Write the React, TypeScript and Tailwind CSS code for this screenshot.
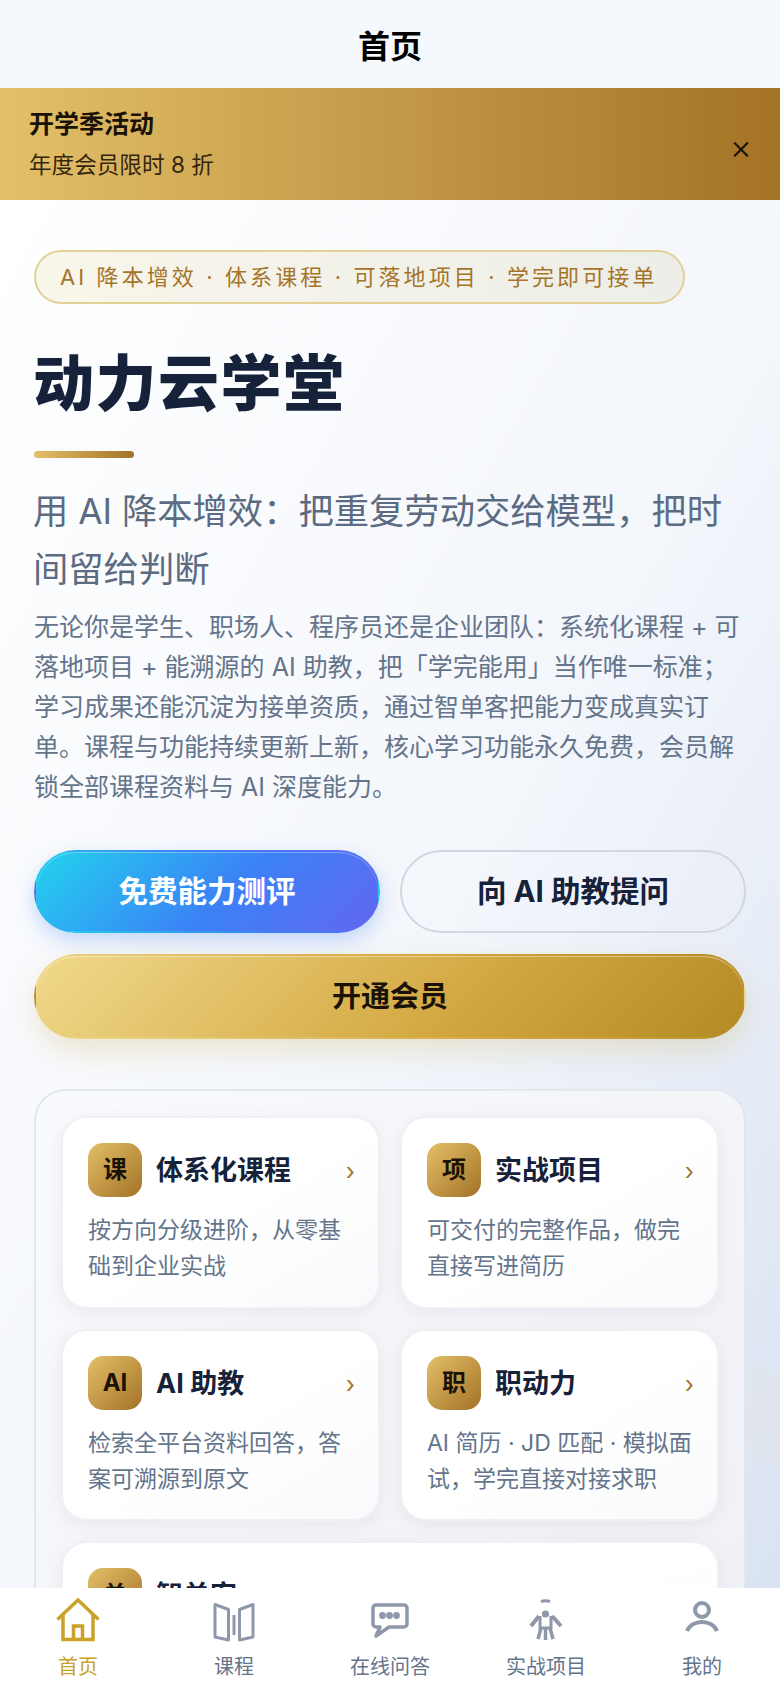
import React from "react";

const font = "[font-family:Inter,'Noto_Sans_CJK_SC',sans-serif]";

const features = [
  { badge: "课", title: "体系化课程", desc: "按方向分级进阶，从零基础到企业实战" },
  { badge: "项", title: "实战项目", desc: "可交付的完整作品，做完直接写进简历" },
  { badge: "AI", title: "AI 助教", desc: "检索全平台资料回答，答案可溯源到原文" },
  { badge: "职", title: "职动力", desc: "AI 简历 · JD 匹配 · 模拟面试，学完直接对接求职" },
  { badge: "单", title: "智单客", desc: "学习成果沉淀为接单资质", wide: true },
];

function HomeIcon() {
  return (
    <svg width="44" height="44" viewBox="0 0 44 44" fill="none" stroke="#c9a227" strokeWidth="3.5">
      <path d="M1.5 21.5 L22 2 L42.5 21.5" />
      <path d="M7 17 V41.5 H37 V17" />
      <path d="M17.5 41.5 V28 H26.5 V41.5" />
    </svg>
  );
}

function CourseIcon() {
  return (
    <svg width="42" height="40" viewBox="0 0 42 40" fill="none" stroke="#8f97aa" strokeWidth="3" strokeLinejoin="round" className="mt-[4px]">
      <path d="M2 2.5 L15.5 7.5 V38 L2 35 Z" />
      <path d="M40 2.5 L26.5 7.5 V38 L40 35 Z" />
      <path d="M21 13 V33" />
    </svg>
  );
}

function ChatIcon() {
  return (
    <svg width="38" height="35" viewBox="0 0 38 35" fill="none">
      <path d="M5 2 H33 A3 3 0 0 1 36 5 V21 A3 3 0 0 1 33 24 H18 L5 33 L9 24 H5 A3 3 0 0 1 2 21 V5 A3 3 0 0 1 5 2 Z" stroke="#8f97aa" strokeWidth="3.5" strokeLinejoin="round" />
      <circle cx="11.5" cy="12.5" r="3.4" fill="#8f97aa" />
      <circle cx="18.5" cy="12.5" r="3.4" fill="#8f97aa" />
      <circle cx="25.5" cy="12.5" r="3.4" fill="#8f97aa" />
    </svg>
  );
}

function ProjectIcon() {
  return (
    <svg width="34" height="42" viewBox="0 0 34 42" fill="none" stroke="#8f97aa" strokeWidth="3.5">
      <path d="M12 2.5 Q16.5 1 21 2.5" strokeWidth="3" />
      <circle cx="16.5" cy="15" r="3.6" fill="#8f97aa" stroke="none" />
      <path d="M11 17 V29 H22 V17" strokeWidth="3" />
      <path d="M10 17 L2 27 M23 17 L32 27" strokeWidth="4" />
      <path d="M12 29 L9 40 M16.5 29 V41 M21 29 L24 40" />
    </svg>
  );
}

function UserIcon() {
  return (
    <svg width="34" height="32" viewBox="0 0 34 32" fill="none" stroke="#8f97aa" strokeWidth="4" className="-mt-[7px]">
      <circle cx="17" cy="9" r="7" />
      <path d="M2 30 C7 18 27 18 32 30" />
    </svg>
  );
}

const tabs = [
  { label: "首页", icon: <HomeIcon />, active: true },
  { label: "课程", icon: <CourseIcon /> },
  { label: "在线问答", icon: <ChatIcon /> },
  { label: "实战项目", icon: <ProjectIcon /> },
  { label: "我的", icon: <UserIcon /> },
];

function FeatureCard({ badge, title, desc, wide }: { badge: string; title: string; desc: string; wide?: boolean }) {
  return (
    <div className={`h-[192.5px] rounded-[26px] border-2 border-[#eef0f4] bg-gradient-to-br from-white via-white to-[#f9fafb] px-[25px] pt-[25px] shadow-[0_4px_18px_rgba(15,23,42,0.06)] ${wide ? "col-span-2" : ""}`}>
      <div className="flex items-center gap-[14px]">
        <div className="flex h-[54px] w-[54px] shrink-0 items-center justify-center rounded-[15px] bg-gradient-to-br from-[#e3c068] to-[#a47325] text-[24px] font-bold text-[#1a1206]">
          {badge}
        </div>
        <div className="mt-[3px] flex-1 text-[27px] font-bold text-[#16213a]">{title}</div>
        <div className="mt-[4px] -mr-[2px] text-[24px] text-[#a5742a]">›</div>
      </div>
      <p className="mt-[15px] text-[23px] leading-[36px] text-[#64748b]">{desc}</p>
    </div>
  );
}

export default function App() {
  return (
    <div className={`flex h-[1688px] w-[780px] flex-col overflow-hidden bg-white ${font}`}>
      <header className="flex h-[88px] shrink-0 items-center justify-center bg-[#f5f8fd] pt-[6px] text-[32px] font-bold text-black">
        首页
      </header>

      <div className="flex h-[112px] shrink-0 items-center justify-between bg-gradient-to-r from-[#e3c068] to-[#a47325] pl-[29px] pr-[28px]">
        <div>
          <div className="text-[25px] font-bold leading-[36px] text-[#1a1206]">开学季活动</div>
          <div className="mt-[5px] text-[22.6px] leading-[36px] text-[#33260f]">年度会员限时 8 折</div>
        </div>
        <div className="mt-[6px] text-[34px] font-light leading-none text-[#1a1206]">×</div>
      </div>

      <main className="relative min-h-0 flex-1 overflow-hidden bg-gradient-to-br from-white via-[#f3f6fb] via-55% to-[#dae3f2] px-[34px] pt-[50px]">
        {/* faint wave behind the right margin */}
        <svg className="absolute bottom-0 right-0" width="40" height="330" viewBox="0 0 40 330" fill="none">
          <path d="M5 102 L40 119 V210 L5 184 Z" fill="#e4e4de" fillOpacity="0.3" />
          <path d="M5 184 L40 210" stroke="#ebe8d9" strokeOpacity="0.7" />
        </svg>

        <div className="relative">
          <div className="inline-block h-[54px] rounded-full border-2 border-[#e2d196] bg-gradient-to-r from-[#f9f6ea] to-[#edeee8] pl-[24px] pr-[25px] text-[22px] leading-[50px] tracking-[3.1px] text-[#a5742a]">
            AI 降本增效 · 体系课程 · 可落地项目 · 学完即可接单
          </div>

          <h1 className="-ml-[1px] mt-[40px] text-[61px] font-extrabold leading-[80px] tracking-[1.5px] text-[#16213a]">动力云学堂</h1>
          <div className="mt-[27px] h-[7px] w-[100px] rounded-full bg-gradient-to-r from-[#e3c068] to-[#a47325]" />

          <h2 className="-ml-[1px] mt-[25px] text-[35.3px] leading-[58px] text-[#5b6b82]">
            用 AI 降本增效：把重复劳动交给模型，把时间留给判断
          </h2>
          <p className="mt-[8px] text-[25px] leading-[40px] text-[#64748b]">
            无论你是学生、职场人、程序员还是企业团队：系统化课程 + 可落地项目 + 能溯源的 AI 助教，把「学完能用」当作唯一标准；学习成果还能沉淀为接单资质，通过智单客把能力变成真实订单。课程与功能持续更新上新，核心学习功能永久免费，会员解锁全部课程资料与 AI 深度能力。
          </p>

          <div className="mt-[43px] grid grid-cols-2 gap-[20px]">
            <button className="h-[83px] rounded-full border-2 border-transparent bg-[linear-gradient(135deg,#22d3ee,#3b82f6_55%,#6366f1)] text-[29.5px] font-bold text-white shadow-[0_8px_20px_rgba(59,130,246,0.28),inset_0_1px_0_rgba(255,255,255,0.3)]">
              免费能力测评
            </button>
            <button className="h-[83px] rounded-full border-2 border-[#d1d6e0] text-[29.5px] font-bold text-[#16213a]">
              向 AI 助教提问
            </button>
          </div>
          <button className="mt-[21px] h-[85px] w-full rounded-full border-2 border-transparent bg-[linear-gradient(135deg,#f0d98c,#d2a63e_62%,#b38a24)] text-[29px] font-bold text-[#1a1206] shadow-[0_12px_28px_rgba(196,160,60,0.22),inset_0_1px_0_rgba(255,255,255,0.4)]">
            开通会员
          </button>

          <section className="mt-[50px] rounded-[32px] border-2 border-[#e2e7ee] bg-gradient-to-br from-[#f8fafd] to-[#eef0f5] p-[25px]">
            <div className="grid grid-cols-2 gap-[20px]">
              {features.map((f) => (
                <FeatureCard key={f.title} {...f} />
              ))}
            </div>
          </section>
        </div>
      </main>

      <nav className="relative grid h-[100px] shrink-0 grid-cols-5 bg-white">
        {tabs.map((t) => (
          <div key={t.label} className="flex flex-col items-center pt-[8px]">
            <div className="flex h-[48px] items-center justify-center">{t.icon}</div>
            <span className={`mt-[9px] text-[20px] leading-[28px] ${t.active ? "text-[#c9a227]" : "text-[#64748b]"}`}>{t.label}</span>
          </div>
        ))}
      </nav>
    </div>
  );
}
